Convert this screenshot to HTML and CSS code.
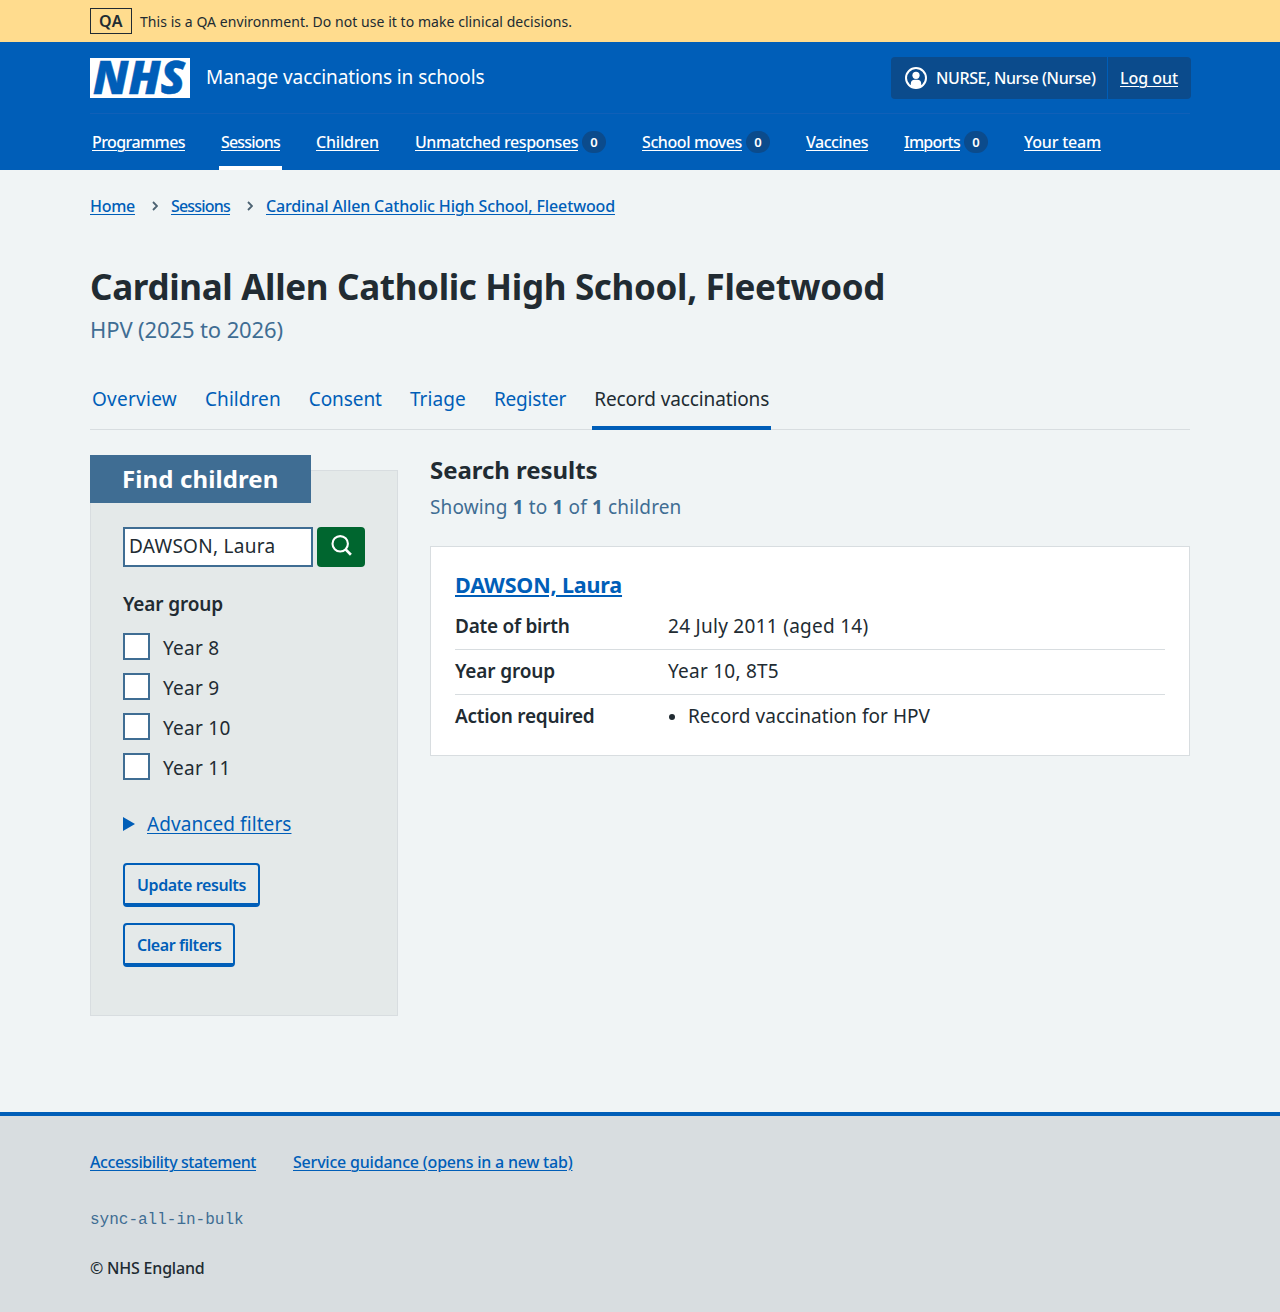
FILE: index.html
```html
<!DOCTYPE html>
<html lang="en">
<head>
<meta charset="utf-8">
<title>Record vaccinations</title>
<link rel="stylesheet" href="styles.css">
</head>
<body>
<div class="environment">
  <div class="container environment-inner"><strong class="environment-tag"><span class="t-qa">QA</span></strong><span class="t-env">This is a QA environment. Do not use it to make clinical decisions.</span></div>
</div>
<header class="header">
  <div class="container">
    <div class="header-top">
      <a class="service" href="#">
        <svg class="logo" viewBox="0 0 100 40" width="100" height="40" role="img" aria-label="NHS"><rect width="100" height="40" fill="#fff"/><text x="3" y="36.2" textLength="92" lengthAdjust="spacingAndGlyphs" class="logo-text">NHS</text></svg>
        <span class="service-name t-service">Manage vaccinations in schools</span>
      </a>
      <div class="account">
        <div class="account-user">
          <svg width="22" height="22" viewBox="0 0 22 22"><circle cx="11" cy="11" r="10" fill="none" stroke="#fff" stroke-width="2"/><circle cx="11" cy="8.3" r="3.6" fill="#fff"/><path d="M5.8 20v-3.2a4 4 0 0 1 4-4h2.4a4 4 0 0 1 4 4V20l-5.2 1.5z" fill="#fff"/></svg>
          <span class="t-user">NURSE, Nurse (Nurse)</span>
        </div>
        <a class="account-link" href="#"><span class="t-logout">Log out</span></a>
      </div>
    </div>
    <nav class="nav">
      <a href="#"><span class="nav-text t-n1">Programmes</span></a>
      <a class="current" href="#"><span class="nav-text t-n2">Sessions</span></a>
      <a href="#"><span class="nav-text t-n3">Children</span></a>
      <a href="#"><span class="nav-text t-n4">Unmatched responses</span><span class="count">0</span></a>
      <a href="#"><span class="nav-text t-n5">School moves</span><span class="count">0</span></a>
      <a href="#"><span class="nav-text t-n6">Vaccines</span></a>
      <a href="#"><span class="nav-text t-n7">Imports</span><span class="count">0</span></a>
      <a href="#"><span class="nav-text t-n8">Your team</span></a>
    </nav>
  </div>
</header>
<main class="container main">
  <nav class="breadcrumb">
    <a href="#" class="t-b1">Home</a>
    <svg class="chevron" width="6" height="10" viewBox="0 0 6 10"><path d="M1 1l4 4-4 4" fill="none" stroke="#4c6272" stroke-width="1.8"/></svg>
    <a href="#" class="t-b2">Sessions</a>
    <svg class="chevron" width="6" height="10" viewBox="0 0 6 10"><path d="M1 1l4 4-4 4" fill="none" stroke="#4c6272" stroke-width="1.8"/></svg>
    <a href="#" class="t-b3">Cardinal Allen Catholic High School, Fleetwood</a>
  </nav>
  <h1 class="title"><span class="t-h1">Cardinal Allen Catholic High School, Fleetwood</span></h1>
  <p class="caption"><span class="t-cap">HPV (2025 to 2026)</span></p>
  <nav class="tabs">
    <a href="#"><span class="t-t1">Overview</span></a>
    <a href="#"><span class="t-t2">Children</span></a>
    <a href="#"><span class="t-t3">Consent</span></a>
    <a href="#"><span class="t-t4">Triage</span></a>
    <a href="#"><span class="t-t5">Register</span></a>
    <a class="current" href="#"><span class="t-t6">Record vaccinations</span></a>
  </nav>
  <div class="columns">
    <section class="filters">
      <h2 class="filters-heading"><span class="t-find">Find children</span></h2>
      <div class="search">
        <div class="search-input"><span class="t-inp">DAWSON, Laura</span></div>
        <button class="search-button" aria-label="Search"><svg width="24" height="24" viewBox="0 0 24 24" fill="none" stroke="#fff"><circle cx="10.2" cy="10.8" r="7.7" stroke-width="2.1"/><path d="M15.6 16.4l5.3 5.3" stroke-width="2.7"/></svg></button>
      </div>
      <h3 class="legend"><span class="t-yg">Year group</span></h3>
      <label class="option"><span class="box"></span><span class="t-y8">Year 8</span></label>
      <label class="option"><span class="box"></span><span class="t-y8">Year 9</span></label>
      <label class="option"><span class="box"></span><span class="t-y10">Year 10</span></label>
      <label class="option"><span class="box"></span><span class="t-y10">Year 11</span></label>
      <div class="details"><svg width="12" height="14" viewBox="0 0 12 14"><path d="M0 0l12 7-12 7z" fill="#005eb8"/></svg><a href="#" class="t-adv">Advanced filters</a></div>
      <button class="button button-update"><span class="t-upd">Update results</span></button>
      <button class="button button-clear"><span class="t-clr">Clear filters</span></button>
    </section>
    <section class="results">
      <h2 class="results-heading"><span class="t-sr">Search results</span></h2>
      <p class="results-count"><span class="t-show">Showing <b>1</b> to <b>1</b> of <b>1</b> children</span></p>
      <article class="card">
        <h3 class="card-heading"><a href="#" class="t-name">DAWSON, Laura</a></h3>
        <dl class="summary">
          <div class="row"><dt><span class="t-dob">Date of birth</span></dt><dd><span class="t-date">24 July 2011 (aged 14)</span></dd></div>
          <div class="row"><dt><span class="t-yg">Year group</span></dt><dd><span class="t-yr">Year 10, 8T5</span></dd></div>
          <div class="row"><dt><span class="t-act">Action required</span></dt><dd class="bulleted"><span class="t-rec">Record vaccination for HPV</span></dd></div>
        </dl>
      </article>
    </section>
  </div>
</main>
<footer class="footer">
  <div class="container">
    <div class="footer-links"><a href="#" class="t-f1">Accessibility statement</a><a href="#" class="t-f2">Service guidance (opens in a new tab)</a></div>
    <p class="release">sync-all-in-bulk</p>
    <p class="copyright"><span class="t-copy">© NHS England</span></p>
  </div>
</footer>
</body>
</html>
```
FILE: styles.css
```css
* { box-sizing: border-box; }
body { margin: 0; background: #f0f4f5; color: #212b32; font: 400 19px/28px "Noto Sans", "Open Sans", sans-serif; }
h1, h2, h3, p, dl, dd { margin: 0; }
a { color: #005eb8; text-underline-offset: 2px; text-decoration-thickness: 1px; }
span, a { white-space: nowrap; }
svg { flex: none; display: block; }
.container { width: 1100px; margin: 0 auto; }

.environment { background: #ffdc8e; height: 42px; font-size: 14px; line-height: 24px; }
.environment-inner { display: flex; gap: 8px; padding-top: 8px; }
.environment-tag { width: 42px; height: 26px; border: 1px solid #212b32; padding-left: 8px; font-size: 16px; line-height: 24px; font-weight: 600; }
.environment .t-env { line-height: 27px; }

.header { background: #005eb8; height: 128px; font-size: 16px; line-height: 24px; font-weight: 500; color: #fff; }
.header a { color: #fff; }
.header-top { display: flex; justify-content: space-between; height: 72px; padding-top: 15px; border-bottom: 1px solid #1060b8; }
.service { display: flex; gap: 16px; padding-top: 1px; text-decoration: none; }
.logo { overflow: visible; }
.logo-text { font: italic 800 46px "Open Sans", sans-serif; fill: #005eb8; stroke: #005eb8; stroke-width: .5px; }
.service-name { font-size: 19px; line-height: 39px; font-weight: 400; }
.account { display: flex; height: 42px; margin-right: -1px; background: #0b4b8c; border-radius: 4px; overflow: hidden; line-height: 42px; }
.account-user { display: flex; align-items: center; gap: 9px; width: 217px; padding-left: 14px; border-right: 1px solid #005eb8; }
.account-link { width: 83px; padding-left: 12px; }
.nav { display: flex; gap: 32px; height: 56px; }
.nav a { display: flex; gap: 4px; padding: 16px 2px 0; border-bottom: 4px solid transparent; text-decoration: none; }
.nav .current { border-color: #fff; }
.nav-text { text-decoration: underline; text-decoration-thickness: 1px; text-underline-offset: 2px; }
.count { width: 24px; height: 22px; margin-top: 1px; border-radius: 11px; background: #0b4b8c; font-size: 13px; font-weight: 600; line-height: 23px; text-align: center; }

.main { height: 942px; padding-top: 24px; }
.breadcrumb { display: flex; font-size: 16px; line-height: 24px; font-weight: 500; }
.chevron { margin: 7px 13px 0 17px; }
.title { margin-top: 46px; font-size: 35px; line-height: 46px; font-weight: 700; }
.caption { margin-top: 3px; font-size: 22px; line-height: 32px; color: #3f6d93; }
.tabs { display: flex; gap: 24px; height: 56px; margin-top: 29px; box-shadow: inset 0 -1px #d8dde0; }
.tabs a { padding: 11px 2px 0; border-bottom: 4px solid transparent; text-decoration: none; }
.tabs .current { border-color: #005eb8; color: #212b32; }

.columns { display: flex; gap: 32px; padding-top: 25px; }
.filters { width: 308px; height: 546px; margin-top: 15px; border: 1px solid #d8dde0; background: #e4e9e9; padding: 0 32px; }
.filters-heading { width: 221px; height: 48px; margin: -16px 0 24px -33px; padding-left: 32px; background: #3f6d93; color: #fff; font-size: 24px; line-height: 48px; }
.search { display: flex; gap: 4px; }
.search-input { width: 190px; height: 40px; padding-left: 4px; border: 2px solid #3f6d93; background: #fff; line-height: 35px; }
.search-button { display: flex; width: 48px; height: 40px; padding: 6px 0 0 13px; border: 0; border-radius: 4px; background: #00662f; align-items: flex-start; }
.legend { margin: 23px 0 9px; font-size: 19px; line-height: 28px; font-weight: 600; }
.option { display: flex; gap: 13px; height: 40px; line-height: 43px; }
.option .box { width: 27px; height: 27px; margin-top: 6px; border: 2px solid #3f6d93; background: #fff; }
.details { display: flex; align-items: center; gap: 12px; height: 28px; margin: 23px 0 25px; }
.button { display: block; height: 44px; margin: 0 0 16px; padding: 2px 0 0 12px; border: 2px solid #005eb8; border-bottom-width: 4px; border-radius: 4px; background: none; color: #005eb8; font: 600 16px/36px "Noto Sans", "Open Sans", sans-serif; text-align: left; }
.button-update { width: 137px; }
.button-clear { width: 112px; }

.results { width: 760px; }
.results-heading { font-size: 24px; line-height: 30px; }
.results-count { margin-top: 8px; color: #3f6d93; }
.card { height: 210px; margin-top: 25px; padding: 22px 24px; border: 1px solid #d8dde0; background: #fff; }
.card-heading { font-size: 21.5px; line-height: 32px; font-weight: 700; }
.card-heading a { text-decoration-thickness: 2px; }
.row { display: flex; height: 45px; padding-top: 7px; border-bottom: 1px solid #d8dde0; }
.row:first-child { height: 49px; padding-top: 11px; }
.row:last-child { border: 0; }
dt { width: 213px; font-weight: 600; }
.bulleted { position: relative; margin-left: 20px; }
.bulleted::before { content: ""; position: absolute; left: -19px; top: 12px; width: 6px; height: 6px; border-radius: 50%; background: #212b32; }

.footer { height: 200px; border-top: 4px solid #005eb8; background: #d8dde0; padding-top: 34px; font-size: 16px; line-height: 24px; font-weight: 500; }
.footer-links { display: flex; gap: 37px; }
.release { margin-top: 34px; color: #3f6d93; font-family: "Liberation Mono", monospace; font-weight: 400; }
.copyright { margin-top: 24px; }

/* Tracking per label */
.t-qa { letter-spacing: .484px; }
.t-env { letter-spacing: .055px; }
.t-service { letter-spacing: -.086px; }
.t-user { letter-spacing: -.379px; }
.t-logout { letter-spacing: -.049px; }
.t-n1 { letter-spacing: -.578px; }
.t-n2, .t-b2 { letter-spacing: -.807px; }
.t-n3 { letter-spacing: -.178px; }
.t-n4 { letter-spacing: -.437px; }
.t-n5 { letter-spacing: -.395px; }
.t-n6 { letter-spacing: -.463px; }
.t-n7 { letter-spacing: -.741px; }
.t-n8 { letter-spacing: -.212px; }
.t-b1 { letter-spacing: -.273px; }
.t-b3 { letter-spacing: -.135px; }
.t-h1 { letter-spacing: -.333px; }
.t-cap { letter-spacing: -.117px; }
.t-t1 { letter-spacing: .264px; }
.t-t2 { letter-spacing: .066px; }
.t-t3 { letter-spacing: -.067px; }
.t-t4 { letter-spacing: .094px; }
.t-t5 { letter-spacing: -.17px; }
.t-t6 { letter-spacing: -.116px; }
.t-find { letter-spacing: .114px; }
.t-inp { letter-spacing: .286px; }
.t-yg { letter-spacing: -.144px; }
.t-y8 { letter-spacing: .276px; }
.t-y10 { letter-spacing: .257px; }
.t-adv { letter-spacing: .08px; }
.t-upd { letter-spacing: -.383px; }
.t-clr { letter-spacing: -.442px; }
.t-sr { letter-spacing: -.054px; }
.t-show { letter-spacing: .143px; }
.t-name { letter-spacing: -.16px; }
.t-dob { letter-spacing: -.258px; }
.t-date { letter-spacing: .278px; }
.t-yr { letter-spacing: .246px; }
.t-act { letter-spacing: -.263px; }
.t-rec { letter-spacing: .045px; }
.t-f1 { letter-spacing: -.423px; }
.t-f2 { letter-spacing: -.206px; }
.t-copy { letter-spacing: -.201px; }
```
